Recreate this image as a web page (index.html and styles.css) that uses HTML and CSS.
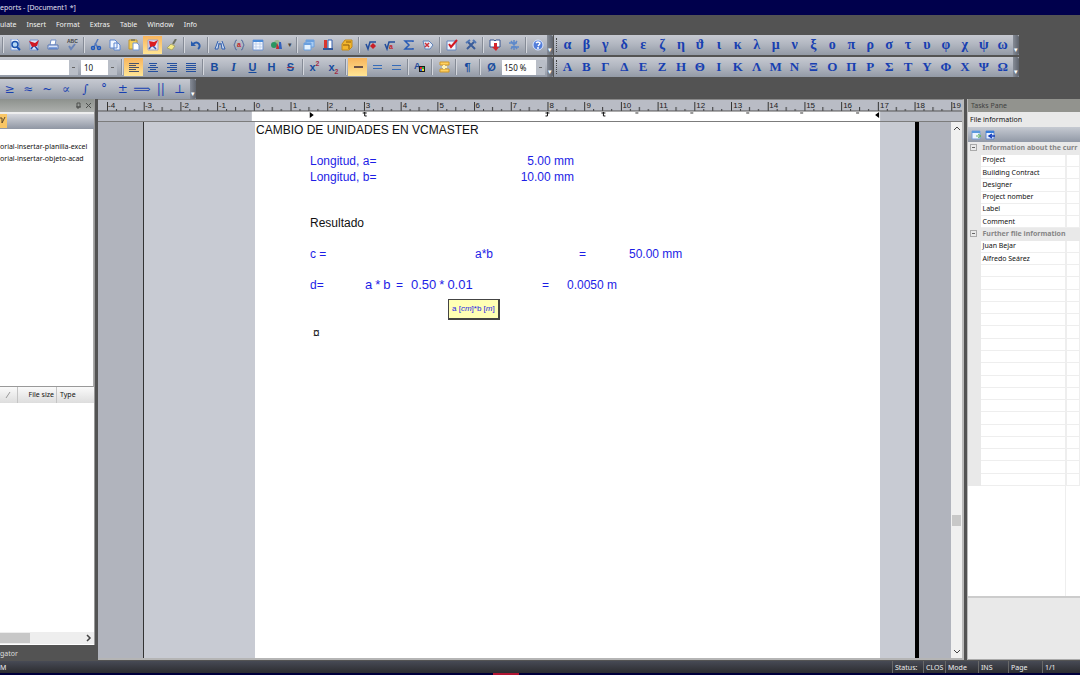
FILE: index.html
```html
<!DOCTYPE html>
<html lang="en">
<head>
<meta charset="utf-8">
<title>Reports - [Document1 *]</title>
<link rel="stylesheet" href="styles.css">
</head>
<body>
<header class="titlebar">eports - [Document1 *]</header>
<nav class="menu">
<button>ulate</button><button>Insert</button><button>Format</button><button>Extras</button><button>Table</button><button>Window</button><button>Info</button>
</nav>
<div class="toolbars">
<div class="toolrow">
<div class="bar bar-main">
<i class="sep"></i>
<button aria-label="Preview"><svg viewBox="0 0 12 12"><path d="M2 0h6l2 2v9H2z" fill="#eef3fc" stroke="#7d9bd4"/><circle cx="6" cy="5.500" r="3" fill="#b6d8f5" stroke="#1c52ae" stroke-width="1.500"/><path d="M8 8l3 3" stroke="#1c52ae" stroke-width="2"/></svg></button>
<button aria-label="Edit preview"><svg viewBox="0 0 12 12"><path d="M2 1h8v10H2z" fill="#dbe5f8" stroke="#7b96cd"/><path d="M3 10l3-4 4 5" stroke="#234da6" stroke-width="1.500" fill="none"/><path d="M1 2l6 2 4-3-2 6-5 1z" fill="#d01824"/></svg></button>
<button aria-label="Print"><svg viewBox="0 0 12 12"><path d="M4 1h5l-1 5H3z" fill="#fff" stroke="#718fc9"/><path d="M1 6h10v4H1z" fill="#d9e3f6" stroke="#5a78b5"/><path d="M2 9h8" stroke="#3164c4"/></svg></button>
<button aria-label="Spelling"><svg viewBox="0 0 12 12"><text x="1" y="4" class="abc">ABC</text><path d="M3 7l2 3 4-5" fill="none" stroke="#6a84b7" stroke-width="2"/></svg></button>
<i class="sep"></i>
<button aria-label="Cut"><svg viewBox="0 0 12 12"><path d="M8 0L4 8M5 4l3 5" stroke="#5278bc" stroke-width="1.500"/><circle cx="3" cy="9" r="1.500" fill="none" stroke="#1f59bd" stroke-width="1.500"/><circle cx="9" cy="9" r="1.500" fill="none" stroke="#1f59bd" stroke-width="1.500"/></svg></button>
<button aria-label="Copy"><svg viewBox="0 0 12 12"><path d="M1 1h5l2 2v6H1zM5 4h4l2 2v5H5z" fill="#f1f6ff" stroke="#5d86d0"/></svg></button>
<button aria-label="Paste"><svg viewBox="0 0 12 12"><path d="M1 1h8v9H1z" fill="#f4cf59" stroke="#be942e"/><path d="M3 0h4v2H3z" fill="#8c825f"/><path d="M5 4h4l2 2v5H5z" fill="#fff" stroke="#7597d2"/></svg></button>
<button class="on" aria-label="Edit mode"><svg viewBox="0 0 12 12"><path d="M1 1h10v10H1z" fill="#e4e4f4" stroke="#a0a3ca"/><path d="M2 10l3-4 4 4" stroke="#395db7" stroke-width="1.500" fill="none"/><path d="M2 2l5 1 4-2-3 6-5 1z" fill="#db1b20"/></svg></button>
<button aria-label="Format painter"><svg viewBox="0 0 12 12"><path d="M10 0L7 5" stroke="#6c7060" stroke-width="2"/><path d="M5 5l4 2-3 4-5-2z" fill="#f5ea80" stroke="#a7a36f"/></svg></button>
<i class="sep"></i>
<button aria-label="Undo"><svg viewBox="0 0 12 12"><path d="M3 5c5-4 9 2 5 5" fill="none" stroke="#285cae" stroke-width="2"/><path d="M1 2v5h5z" fill="#285cae"/></svg></button>
<i class="sep"></i>
<button aria-label="Find"><svg viewBox="0 0 12 12"><path d="M4 2L1 10h3l1-6M8 2l3 8H8L7 4M5 5h2" fill="#cbdcf4" stroke="#315fae"/></svg></button>
<button aria-label="Find variable"><svg viewBox="0 0 12 12"><path d="M4 1Q2 1 2 4L1 6l1 2q0 3 2 3M8 1q2 0 2 3l1 2-1 2q0 3-2 3" fill="none" stroke="#536c9e"/><text x="4" y="8" class="red">a</text></svg></button>
<button aria-label="Table"><svg viewBox="0 0 12 12"><path d="M1 1h10v10H1z" fill="#f5f9ff" stroke="#7094d0"/><path d="M1 2h10" stroke="#4c8cd9" stroke-width="2"/><path d="M4 3v8M8 3v8M1 5h10M1 8h10" stroke="#afc4e6" stroke-width=".7"/></svg></button>
<button aria-label="Colours"><svg viewBox="0 0 12 12"><circle cx="6" cy="4" r="3" fill="#9cb690"/><circle cx="3" cy="6" r="3" fill="#2a9661"/><path d="M6 4l3 6H5z" fill="#c12e35"/><path d="M8 3h2l1 7H8z" fill="#3261bd"/></svg></button>
<button class="caret" aria-label="Colour list">▾</button>
<i class="sep"></i>
<button aria-label="Windows"><svg viewBox="0 0 12 12"><path d="M3 1h8v7H3z" fill="#a7cbf2" stroke="#6ba0df"/><path d="M1 4h7v7H1z" fill="#e4f2ff" stroke="#6ba0df"/><path d="M1 5h7M3 2h8" stroke="#6ba0df" stroke-width="2"/></svg></button>
<button aria-label="Library"><svg viewBox="0 0 12 12"><path d="M2 1h3v9H2z" fill="#d9352e"/><path d="M6 1h4v9H6z" fill="#fff" stroke="#315dac"/><path d="M1 10h10" stroke="#31579b" stroke-width="2"/></svg></button>
<button aria-label="Archive"><svg viewBox="0 0 12 12"><path d="M4 1h7v7L8 11H1V5z" fill="#f3b62d" stroke="#c18a1c"/><path d="M2 6h6v4M5 3h5" stroke="#8d5b0c" fill="none"/></svg></button>
<i class="sep"></i>
<button aria-label="Calculate"><svg viewBox="0 0 12 12"><path d="M1 5l2 5 2-7h6" fill="none" stroke="#234d9c" stroke-width="1.500"/><path d="M8 4l3 3-3 3-3-3z" fill="#c91f28"/></svg></button>
<button aria-label="Root"><svg viewBox="0 0 12 12"><path d="M1 5l2 5 2-7h6" fill="none" stroke="#234d9c" stroke-width="1.500"/><text x="5" y="10" class="red">a</text></svg></button>
<button aria-label="Sum"><svg viewBox="0 0 12 12"><path d="M10 3V2H2l4 4-4 4h8V9" fill="none" stroke="#285bb5" stroke-width="1.500"/></svg></button>
<button aria-label="Remove formula"><svg viewBox="0 0 12 12"><path d="M1 2h6l4 4-3 4H3z" fill="#e5edf9" stroke="#6183b8"/><path d="M3 4l4 4M7 4L3 8" stroke="#cd3138" stroke-width="1.500"/></svg></button>
<i class="sep"></i>
<button aria-label="Check"><svg viewBox="0 0 12 12"><path d="M1 2h9v9H1z" fill="#f1f5fd" stroke="#6685be"/><path d="M3 5l2 3 6-7" fill="none" stroke="#d31822" stroke-width="2"/></svg></button>
<button aria-label="Tools"><svg viewBox="0 0 12 12"><path d="M3 3l7 7M9 3l-7 7" stroke="#3a5c99" stroke-width="2"/><path d="M1 4l4-3M8 1l3 3" stroke="#4f76b4" stroke-width="2"/></svg></button>
<i class="sep"></i>
<button aria-label="Import"><svg viewBox="0 0 12 12"><path d="M1 1h4l1 1 1-1h4v7H1z" fill="#fff" stroke="#365591"/><path d="M5 4h3v4h2l-3 4-4-4h2z" fill="#d4252c"/></svg></button>
<button aria-label="Update"><svg viewBox="0 0 12 12"><path d="M6 1v10M3 2l6 8M9 2l-6 8M1 4h8M3 8h8" stroke="#5e89ca" stroke-width="1.500"/></svg></button>
<i class="sep"></i>
<button aria-label="Help"><svg viewBox="0 0 12 12"><circle cx="6" cy="6" r="5" fill="#527dda" stroke="#dce8ff"/><path d="M4 4q2-2 4 0 0 1-2 3" fill="none" stroke="#fff" stroke-width="1.500"/><circle cx="6" cy="9" r="1" fill="#fff"/></svg></button>
<span class="end"></span>
</div>
<div class="bar greek"><span class="grip"></span><button>α</button><button>β</button><button>γ</button><button>δ</button><button>ε</button><button>ζ</button><button>η</button><button>ϑ</button><button>ι</button><button>κ</button><button>λ</button><button>μ</button><button>ν</button><button>ξ</button><button>ο</button><button>π</button><button>ρ</button><button>σ</button><button>τ</button><button>υ</button><button>φ</button><button>χ</button><button>ψ</button><button>ω</button><span class="end"></span></div>
</div>
<div class="toolrow">
<div class="bar bar-main">
<select class="fontname" aria-label="Font"><option></option></select>
<select class="fontsize" aria-label="Font size"><option>10</option></select>
<i class="sep wide"></i>
<button class="on" aria-label="Align left"><svg viewBox="0 0 12 12"><path d="M1 2.500h10M1 4.500h7M1 6.500h10M1 8.500h7M1 10.500h10" stroke="#49536b"/></svg></button>
<button aria-label="Centre"><svg viewBox="0 0 12 12"><path d="M2 2.500h8M3 4.500h6M1 6.500h10M3 8.500h6M1 10.500h10" stroke="#234f9f"/></svg></button>
<button aria-label="Align right"><svg viewBox="0 0 12 12"><path d="M1 2.500h10M4 4.500h7M1 6.500h10M4 8.500h7M1 10.500h10" stroke="#234f9f"/></svg></button>
<button aria-label="Justify"><svg viewBox="0 0 12 12"><path d="M1 2.500h10M1 4.500h10M1 6.500h10M1 8.500h10M1 10.500h10" stroke="#234f9f"/></svg></button>
<i class="sep"></i>
<button class="t">B</button><button class="t serif"><em>I</em></button><button class="t"><u>U</u></button><button class="t">H</button><button class="t"><s>S</s></button>
<i class="sep"></i>
<button class="t">x<sup>2</sup></button><button class="t">x<sub>2</sub></button>
<i class="sep"></i>
<button class="on" aria-label="Line normal"><svg viewBox="0 0 12 12"><path d="M2 6h9" stroke="#6b5148" stroke-width="2"/></svg></button>
<button aria-label="Line medium"><svg viewBox="0 0 12 12"><path d="M2 4.500h9M2 7.500h9" stroke="#356bb8"/></svg></button>
<button aria-label="Line wide"><svg viewBox="0 0 12 12"><path d="M2 4.500h9M2 8.500h9" stroke="#356bb8"/></svg></button>
<i class="sep"></i>
<button aria-label="Text colour"><svg viewBox="0 0 12 12"><text x="0" y="8" class="acol">A</text><path d="M5 5h6v6H5z" fill="#191919"/><path d="M6 6h2v2H6z" fill="#e92b2b"/><path d="M8 6h2v2H8z" fill="#2bb24c"/><path d="M6 8h2v2H6z" fill="#2f64dd"/><path d="M8 8h2v2H8z" fill="#f4da26"/></svg></button>
<i class="sep"></i>
<button aria-label="Page break"><svg viewBox="0 0 12 12"><path d="M2 1h9v3H2zM2 8h9v3H2z" fill="#ffd060" stroke="#cf9726"/><path d="M6 4v4M4 6h5" stroke="#fff3b5" stroke-width="2"/></svg></button>
<i class="sep"></i>
<button class="t">¶</button>
<i class="sep"></i>
<button class="t">Ø</button>
<select class="zoom" aria-label="Zoom"><option>150 %</option></select>
<span class="end"></span>
</div>
<div class="bar greek upper"><span class="grip"></span><button>Α</button><button>Β</button><button>Γ</button><button>Δ</button><button>Ε</button><button>Ζ</button><button>Η</button><button>Θ</button><button>Ι</button><button>Κ</button><button>Λ</button><button>Μ</button><button>Ν</button><button>Ξ</button><button>Ο</button><button>Π</button><button>Ρ</button><button>Σ</button><button>Τ</button><button>Υ</button><button>Φ</button><button>Χ</button><button>Ψ</button><button>Ω</button><span class="end"></span></div>
</div>
<div class="toolrow">
<div class="bar symbols"><button>≥</button><button>≈</button><button>~</button><button>∝</button><button>∫</button><button>°</button><button>±</button><button>⟹</button><button>||</button><button>⊥</button><span class="end"></span></div>
</div>
</div>
<main class="work">
<aside class="navigator">
<div class="navbox">
<div class="pane-head nav-head"><svg class="pin" viewBox="0 0 18 8"><path d="M3 1h3v4H3zM2 5h5M4 5v2M12 1l5 5M17 1l-5 5" fill="none" stroke="#4e504e"/></svg></div>
<div class="nav-tools"><button class="on" aria-label="Filter"><svg viewBox="0 0 6 12"><path d="M0 3h2v5l3-6" fill="none" stroke="#5a472c"/></svg></button></div>
<ul class="tree"><li>orial-insertar-planilla-excel</li><li>orial-insertar-objeto-acad</li></ul>
<div class="files"><span class="sort"><svg viewBox="0 0 6 8"><path d="M1 7l4-6" stroke="#999"/></svg></span><span>File size</span><span>Type</span></div>
<div class="filelist"></div>
<div class="hscroll"><span class="hthumb"></span><button aria-label="Scroll right"><svg viewBox="0 0 8 8"><path d="M3 1l3 3-3 3" fill="none" stroke="#444" stroke-width="1.500"/></svg></button></div>
</div>
<div class="navtab">gator</div>
</aside>
<section class="document">
<svg class="ruler" viewBox="0 0 865 22" preserveAspectRatio="xMinYMin slice">
<defs><pattern id="cm" x="9" width="36.750" height="11" patternUnits="userSpaceOnUse"><path d="M.5 2v9M18.500 7v4M9.500 9v2M27.500 9v2" stroke="#333"/></pattern></defs>
<path d="M0 0h865v22H0z" fill="#b9bcc5"/><path d="M154 11h629v11H154z" fill="#fff"/>
<path d="M9 0h850v11H9z" fill="url(#cm)"/><path d="M0 11h865" stroke="#555"/>
<g class="nums"><text x="10" y="8">-4</text><text x="47" y="8">-3</text><text x="84" y="8">-2</text><text x="121" y="8">-1</text><text x="158" y="8">0</text><text x="195" y="8">1</text><text x="231" y="8">2</text><text x="268" y="8">3</text><text x="305" y="8">4</text><text x="342" y="8">5</text><text x="378" y="8">6</text><text x="415" y="8">7</text><text x="452" y="8">8</text><text x="489" y="8">9</text><text x="525" y="8">10</text><text x="562" y="8">11</text><text x="599" y="8">12</text><text x="636" y="8">13</text><text x="672" y="8">14</text><text x="709" y="8">15</text><text x="746" y="8">16</text><text x="783" y="8">17</text><text x="819" y="8">18</text><text x="855" y="8">19</text></g>
<path d="M212 12l4 3-4 3zM782 12l-4 3 4 3z"/><path d="M267 12v4h2M265 13h4M450 12v4h-2M448 13h4M506 12v4h2M504 13h4" fill="none" stroke="#111"/><path d="M541 13h-3M596 13h-3M652 13h-3M706 13h-3M762 13h-3" stroke="#333"/>
</svg>
<div class="canvas">
<div class="desk"></div><div class="margin left"></div>
<article class="page">
<p class="black title">CAMBIO DE UNIDADES EN VCMASTER</p>
<dl class="given"><dt>Longitud, a=</dt><dd>5.00 mm</dd><dt>Longitud, b=</dt><dd>10.00 mm</dd></dl>
<p class="black result">Resultado</p>
<div class="eq eq-c"><span>c =</span><span>a*b</span><span>=</span><span>50.00 mm</span></div>
<div class="eq eq-d"><span>d=</span><span class="formula"><b>a</b><b>*</b><b>b</b></span><span>=</span><span class="formula"><b>0.50</b><b>*</b><b>0.01</b></span><span>=</span><span>0.0050 m</span><span class="tip" role="tooltip">a [<em>cm</em>]*b [<em>m</em>]</span></div>
<p class="black mark">¤</p>
</article>
<div class="margin right"></div><div class="desk desk-right"></div>
<div class="vscroll"><button aria-label="Scroll up"><svg viewBox="0 0 8 8"><path d="M1 6l3-3 3 3" fill="none" stroke="#444"/></svg></button><span class="vthumb"></span><button aria-label="Scroll down"><svg viewBox="0 0 8 8"><path d="M1 2l3 3 3-3" fill="none" stroke="#444"/></svg></button></div>
</div>
</section>
<aside class="tasks">
<div class="pane-head">Tasks Pane</div>
<h2>File information</h2>
<div class="task-tools"><button aria-label="Export list"><svg viewBox="0 0 10 10"><path d="M1 1h8v8H1z" fill="#edf4ff" stroke="#7b9fd8"/><path d="M1 2h8" stroke="#5b9ade" stroke-width="2"/><path d="M5 6h4M7 4l3 2-3 2" stroke="#69b668" fill="none"/></svg></button><button aria-label="Import list"><svg viewBox="0 0 10 10"><path d="M1 1h8v8H1z" fill="#edf4ff" stroke="#6186ca"/><path d="M1 2h8" stroke="#377dd9" stroke-width="2"/><path d="M10 6H5M7 4L4 6l3 2" stroke="#153fbb" stroke-width="1.500" fill="none"/></svg></button></div>
<div class="grid-wrap">
<table class="props"><colgroup><col class="c1"><col class="c2"><col></colgroup><tbody>
<tr class="group"><td><button aria-label="Collapse"></button></td><th colspan="2">Information about the curr</th></tr>
<tr><td></td><td>Project</td><td></td></tr><tr><td></td><td>Building Contract</td><td></td></tr><tr><td></td><td>Designer</td><td></td></tr><tr><td></td><td>Project nomber</td><td></td></tr><tr><td></td><td>Label</td><td></td></tr><tr><td></td><td>Comment</td><td></td></tr>
<tr class="group"><td><button aria-label="Collapse"></button></td><th colspan="2">Further file information</th></tr>
<tr><td></td><td>Juan Bejar</td><td></td></tr><tr><td></td><td>Alfredo Seárez</td><td></td></tr>
<tr><td></td><td></td><td></td></tr><tr><td></td><td></td><td></td></tr><tr><td></td><td></td><td></td></tr><tr><td></td><td></td><td></td></tr><tr><td></td><td></td><td></td></tr><tr><td></td><td></td><td></td></tr><tr><td></td><td></td><td></td></tr><tr><td></td><td></td><td></td></tr><tr><td></td><td></td><td></td></tr><tr><td></td><td></td><td></td></tr><tr><td></td><td></td><td></td></tr><tr><td></td><td></td><td></td></tr><tr><td></td><td></td><td></td></tr><tr><td></td><td></td><td></td></tr><tr><td></td><td></td><td></td></tr><tr><td></td><td></td><td></td></tr><tr><td></td><td></td><td></td></tr><tr><td></td><td></td><td></td></tr>
</tbody></table>
</div>
<div class="help"></div>
</aside>
</main>
<footer class="status"><span class="mode">M</span><span>Status:</span><span>CLOS</span><span>Mode</span><span>INS</span><span>Page</span><span>1/1</span></footer>
<div class="edge"><i></i></div>
</body>
</html>
```
FILE: styles.css
```css
* { box-sizing: border-box; }
body { margin: 0; height: 100vh; display: flex; flex-direction: column; background: #535353; font: 7px/12px "Noto Sans", "Open Sans", sans-serif; color: #111; overflow: hidden; }
button { border: 0; padding: 0; margin: 0; background: none; font: inherit; color: inherit; flex: none; }
p, ul, dl, dd, h2 { margin: 0; padding: 0; }
svg { display: block; }
.titlebar { background: #00004c; color: #e2e2f0; height: 15px; line-height: 15px; }
.menu { height: 20px; display: flex; align-items: center; gap: 10px; color: #f2f2f2; }
.toolbars { display: flex; flex-direction: column; gap: 2px; }
.toolrow { display: flex; height: 20px; gap: 1px; }
.bar { display: flex; align-items: center; height: 20px; background: linear-gradient(#c6c9d1, #b2b7c1 45%, #939aa6); }
.bar-main { width: 553px; flex: none; }
.bar button { width: 19px; height: 18px; display: flex; align-items: center; justify-content: center; }
.bar svg { width: 12px; height: 12px; }
.bar .caret { width: 8px; font-size: 7px; color: #444; }
.bar .on { background: linear-gradient(#f8b45c, #ffe594); }
.sep { width: 5px; height: 16px; flex: none; border-left: 2px solid transparent; background: linear-gradient(90deg, #858b96 1px, #d4d7dd 1px, #d4d7dd 2px, transparent 2px); background-clip: padding-box; }
.sep.wide { margin-left: 2px; }
.end { width: 6px; height: 20px; margin-left: auto; flex: none; background: linear-gradient(90deg, #858b96, #5e636c); border-radius: 0 2px 2px 0; }
.end::after { content: "▾"; display: block; color: #fff; font-size: 7px; line-height: 30px; text-align: center; }
.bar .t { display: block; text-align: center; font: bold 11px/18px "Liberation Sans", sans-serif; color: #164a9d; }
.bar .serif { font-family: "Liberation Serif", serif; font-size: 12px; }
.t sup, .t sub { font-size: 7px; line-height: 7px; color: #a32d45; }
.t s { text-decoration-color: #9b3a4c; }
.abc { font: bold 5px "Liberation Sans", sans-serif; fill: #444; }
.red { font: bold 7px "Liberation Sans", sans-serif; fill: #c11f2a; }
.acol { font: bold 9px "Liberation Sans", sans-serif; fill: #214a99; }
select { appearance: none; border: 0; border-radius: 0; height: 15px; padding: 0 3px; margin: 0; color: #111; font: 8px/15px "Noto Sans", sans-serif; background: linear-gradient(#666, #666) right 3px center / 3px 1px no-repeat, linear-gradient(90deg, #b9bec7, #b9bec7) right / 9px 100% no-repeat, #fff; flex: none; }
.fontname { width: 78px; margin-right: 3px; }
.fontsize { width: 36px; }
.zoom { width: 43px; margin-left: 1px; padding: 0 2px; }
.greek { width: 465px; }
.grip { width: 3px; height: 14px; flex: none; border-right: 1px dotted #444; margin-right: 1px; }
.bar.greek button { flex: 1; width: auto; font: bold 14px/18px "Liberation Serif", serif; color: #173fb1; }
.bar.upper button { font-size: 13px; }
.greek .end, .symbols .end { margin-left: 1px; }
.symbols { width: 196px; }
.bar.symbols button { flex: 1; width: auto; font: 12px/18px "DejaVu Serif", "DejaVu Sans", serif; color: #173fb1; }
.work { flex: 1; min-height: 0; display: flex; gap: 3px; }
.navigator { width: 95px; flex: none; display: flex; flex-direction: column; }
.navbox { flex: 1; min-height: 0; display: flex; flex-direction: column; background: #fff; border-right: 1px solid #999; }
.pane-head { height: 13px; flex: none; background: #92938e; color: #41423f; padding-left: 3px; line-height: 13px; }
.nav-head { display: flex; align-items: center; justify-content: flex-end; background: linear-gradient(#8d918d, #adb0ad); }
.pin { width: 18px; height: 8px; margin-right: 2px; }
.nav-tools { height: 17px; flex: none; border-top: 2px solid #eee; background: linear-gradient(#d5d7dd, #8f96a3); }
.nav-tools button { width: 7px; height: 14px; background: #f9c665; }
.nav-tools svg { width: 6px; height: 12px; }
.tree { height: 258px; flex: none; list-style: none; padding-top: 12px; border-right: 1px solid #aaa; border-bottom: 1px solid #999; white-space: nowrap; overflow: hidden; }
.files { display: grid; grid-template-columns: 18px 39px 1fr; height: 16px; flex: none; line-height: 15px; background: linear-gradient(#fafafa, #ddd); }
.files span { border-right: 1px solid #c4c4c4; text-align: right; padding-right: 2px; }
.files span:last-child { border: 0; text-align: left; padding-left: 3px; }
.files .sort { padding: 4px 5px; }
.sort svg { width: 6px; height: 8px; }
.filelist { flex: 1; }
.hscroll { height: 12px; margin-bottom: 1px; background: #eee; display: flex; justify-content: space-between; align-items: center; }
.hthumb { width: 30px; height: 10px; background: #c8c8c8; }
.hscroll button { width: 12px; }
.hscroll svg, .vscroll svg { width: 8px; height: 8px; margin: auto; }
.navtab { height: 16px; flex: none; line-height: 18px; color: #ddd; }
.document { flex: 1; min-width: 0; margin-bottom: 1px; display: flex; flex-direction: column; border-top: 1px solid #888; border-right: 2px solid #bbb; border-bottom: 2px solid #b5b5b5; }
.ruler { width: 100%; height: 22px; flex: none; border-bottom: 1px solid #7c7c7c; }
.nums { font: 8px "Liberation Sans", sans-serif; fill: #222; }
.canvas { flex: 1; min-height: 0; display: flex; }
.desk { width: 46px; flex: none; background: #b1b4bd; border-right: 1px solid #333; }
.desk-right { width: 36px; border-right: 0; border-left: 4px solid #000; }
.margin { flex: none; background: #c8cbd3; }
.left { width: 111px; }
.right { width: 35px; }
.page { flex: 1; background: #fff; font: 12px/16px "Liberation Sans", Arial, sans-serif; color: #1d1de6; white-space: nowrap; overflow: hidden; }
.black { color: #111; }
.title { padding-left: 1px; }
.given { display: grid; grid-template-columns: 100px 164px; padding-left: 55px; margin-top: 15px; }
.given dd { text-align: right; }
.result { padding-left: 55px; margin-top: 30px; }
.eq { display: grid; padding-left: 55px; margin-top: 15px; position: relative; }
.eq-c { grid-template-columns: 165px 104px 50px 1fr; }
.eq-d { grid-template-columns: 55px 31px 15px 131px 25px 1fr; }
.formula { display: flex; gap: 3px; font-size: 13px; }
.formula b { font-weight: normal; }
.tip { position: absolute; left: 193px; top: 22px; height: 21px; padding: 0 3px; border: 1px solid #444; border-right-width: 2px; border-bottom-width: 2px; background: #ffffb4; font-size: 8px; line-height: 18px; }
.mark { padding-left: 58px; margin-top: 32px; }
.vscroll { width: 11px; flex: none; background: #f0f0f0; display: flex; flex-direction: column; }
.vscroll button { height: 12px; }
.vthumb { height: 11px; background: #c8c8c8; margin: auto 1px 0; }
.vscroll .vthumb + button { margin-top: 120px; }
.tasks { width: 113px; flex: none; margin-bottom: 1px; display: flex; flex-direction: column; background: #fff; border-left: 1px solid #bbb; }
.tasks h2 { font-size: 7px; font-weight: normal; height: 15px; line-height: 15px; flex: none; padding-left: 2px; background: #e9e9e9; }
.task-tools { height: 15px; flex: none; display: flex; align-items: center; gap: 4px; padding-left: 3px; background: linear-gradient(#c6cad2, #9199a6); }
.task-tools svg { width: 10px; height: 10px; }
.grid-wrap { flex: 1; min-height: 0; background: linear-gradient(#eee, #eee) 97px 0 / 1px 100% no-repeat; }
.props { table-layout: fixed; width: 100%; height: 344px; border-collapse: collapse; }
.props tr { height: 12px; }
.c1 { width: 12px; }
.c2 { width: 86px; }
.props td, .props th { padding: 0 0 0 2px; line-height: 10px; text-align: left; white-space: nowrap; overflow: hidden; border-bottom: 1px solid #eee; border-right: 1px solid #eee; }
.props td:first-child { background: #e9e9e9; border-color: #e9e9e9; }
.props .group th { background: #e9e9e9; color: #868686; border-color: #e9e9e9; }
.props button { width: 7px; height: 7px; border: 1px solid #aaa; display: block; background: linear-gradient(#666, #666) center / 3px 1px no-repeat; }
.help { height: 64px; flex: none; background: #e9e9e9; border-top: 2px solid #ccc; border-bottom: 1px solid #aaa; }
.status { height: 12px; flex: none; display: grid; grid-template-columns: 1fr 31px 22px 33px 30px 34px 38px; line-height: 14px; background: linear-gradient(#474a55, #2c2d30); color: #eee; }
.status span { height: 12px; border-left: 1px solid #686868; padding-left: 2px; }
.status .mode { border: 0; padding: 0; }
.edge { height: 2px; flex: none; background: #00003c; display: flex; justify-content: center; }
.edge i { width: 26px; margin-right: 68px; background: #b01432; }
```
